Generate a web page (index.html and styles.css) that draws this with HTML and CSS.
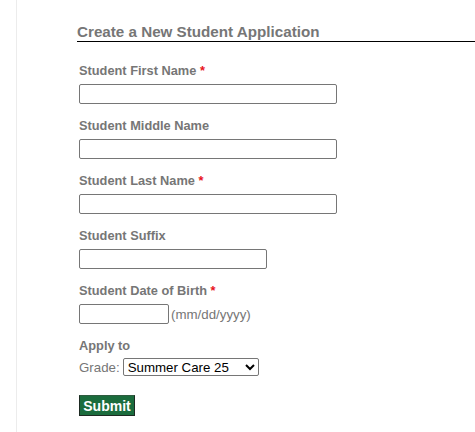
FILE: index.html
```html
<!DOCTYPE html>
<html>
<head>
<meta charset="utf-8">
<link rel="stylesheet" href="styles.css">
</head>
<body>
<div class="page">
  <div class="content">
    <h2 class="title">Create a New Student Application</h2>
    <form class="form">
      <div class="field">
        <label class="label">Student First Name <span class="req">*</span></label>
        <input class="input wide" type="text">
      </div>
      <div class="field">
        <label class="label">Student Middle Name</label>
        <input class="input wide" type="text">
      </div>
      <div class="field">
        <label class="label">Student Last Name <span class="req">*</span></label>
        <input class="input wide" type="text">
      </div>
      <div class="field">
        <label class="label">Student Suffix</label>
        <input class="input medium" type="text">
      </div>
      <div class="field">
        <label class="label">Student Date of Birth <span class="req">*</span></label>
        <div class="row">
          <input class="input short" type="text">
          <span class="hint">(mm/dd/yyyy)</span>
        </div>
      </div>
      <div class="field apply">
        <label class="label">Apply to</label>
        <div class="row">
          <span class="hint grade">Grade:</span>
          <select class="select"><option>Summer Care 25</option></select>
        </div>
      </div>
      <button class="submit" type="button">Submit</button>
    </form>
  </div>
</div>
</body>
</html>
```
FILE: styles.css
```css
html, body {
  margin: 0;
  padding: 0;
  background: #fff;
}
body {
  font-family: "Liberation Sans", Arial, sans-serif;
}
.page {
  margin-left: 16px;
  border-left: 1px solid #ececec;
  min-height: 432px;
  box-sizing: border-box;
}
.content {
  padding-left: 60px;
  padding-top: 23px;
}
.title {
  margin: 0;
  font-size: 15.2px;
  line-height: 18px;
  font-weight: bold;
  color: #767676;
  border-bottom: 1px solid #000;
}
.form {
  display: flex;
  flex-direction: column;
  align-items: flex-start;
  padding-left: 2px;
  padding-top: 21px;
}
.field {
  display: flex;
  flex-direction: column;
  align-items: flex-start;
  gap: 6px;
  margin-bottom: 14px;
}
.label {
  font-size: 12.8px;
  line-height: 15px;
  font-weight: bold;
  color: #767676;
}
.req {
  color: #e8141c;
}
.input {
  box-sizing: border-box;
  height: 20px;
  margin: 0;
  border: 1px solid #767676;
  border-radius: 2px;
  padding: 1px 2px;
  font-family: "Liberation Sans", Arial, sans-serif;
  font-size: 13px;
  background: #fff;
}
.wide { width: 258px; }
.medium { width: 188px; }
.short { width: 90px; }
.row {
  display: flex;
  align-items: center;
  gap: 2px;
}
.hint {
  font-size: 13.3px;
  color: #767676;
}
.apply {
  gap: 5px;
  margin-bottom: 19px;
}
.apply .row {
  gap: 3px;
}
.select {
  box-sizing: border-box;
  width: 136px;
  height: 18px;
  margin: 0;
  border: 1px solid #767676;
  border-radius: 2px;
  font-family: "Liberation Sans", Arial, sans-serif;
  font-size: 13.3px;
  color: #000;
  background: #fff;
}
.submit {
  box-sizing: border-box;
  height: 21px;
  width: 56px;
  margin: 0;
  padding: 0;
  background: #1b6c3d;
  color: #fff;
  border: 1px solid #1d2a22;
  border-top-color: #2f5c40;
  font-family: "Liberation Sans", Arial, sans-serif;
  font-size: 14px;
  font-weight: bold;
}
```
